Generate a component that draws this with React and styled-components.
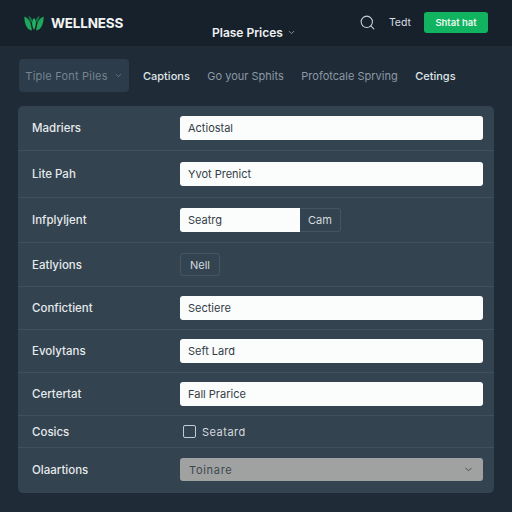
import React from "react";
import styled, { createGlobalStyle } from "styled-components";
import { ChevronDown, Search } from "lucide-react";

const GlobalStyle = createGlobalStyle`
  html, body {
    margin: 0;
    padding: 0;
    background: #1e2a36;
  }
  * {
    box-sizing: border-box;
  }
`;

const tabs = [
  { label: "Captions", bright: true },
  { label: "Go your Sphits" },
  { label: "Profotcale Sprving" },
  { label: "Cetings", bright: true },
];

const App = () => {
  return (
    <Page>
      <GlobalStyle />
      <Header>
        <Brand>
          <LogoMark />
          WELLNESS
        </Brand>
        <PageTitle>
          Plase Prices
          <ChevronDown size={9} strokeWidth={2.5} />
        </PageTitle>
        <HeaderActions>
          <Search size={17} strokeWidth={1.5} color="#c8d0d6" />
          <HeaderLink>Tedt</HeaderLink>
          <GreenButton>Shtat hat</GreenButton>
        </HeaderActions>
      </Header>
      <TabBar>
        <TabSelect>
          Tiple Font Piles
          <ChevronDown size={9} strokeWidth={2} />
        </TabSelect>
        {tabs.map((tab) => (
          <Tab key={tab.label} $bright={tab.bright}>
            {tab.label}
          </Tab>
        ))}
      </TabBar>
      <Card>
        <Row $height={45}>
          <Label>Madriers</Label>
          <TextInput>Actiostal</TextInput>
        </Row>
        <Row $height={47}>
          <Label>Lite Pah</Label>
          <TextInput>Yvot Prenict</TextInput>
        </Row>
        <Row $height={45}>
          <Label>Infplyljent</Label>
          <InputGroup>
            <GroupInput>Seatrg</GroupInput>
            <GroupAddon>Cam</GroupAddon>
          </InputGroup>
        </Row>
        <Row $height={44}>
          <Label>Eatlyions</Label>
          <OutlineButton>Nell</OutlineButton>
        </Row>
        <Row $height={43}>
          <Label>Confictient</Label>
          <TextInput>Sectiere</TextInput>
        </Row>
        <Row $height={43}>
          <Label>Evolytans</Label>
          <TextInput>Seft Lard</TextInput>
        </Row>
        <Row $height={43}>
          <Label>Certertat</Label>
          <TextInput>Fall Prarice</TextInput>
        </Row>
        <Row $height={32}>
          <Label>Cosics</Label>
          <CheckLabel>
            <CheckBox />
            Seatard
          </CheckLabel>
        </Row>
        <Row $height={45}>
          <Label>Olaartions</Label>
          <SelectBox>
            Toinare
            <ChevronDown size={11} strokeWidth={2} />
          </SelectBox>
        </Row>
      </Card>
    </Page>
  );
};

export default App;

const LogoMark = () => (
  <svg width="20" height="16" viewBox="0 0 20 16">
    <path d="M0.3 1.5C3 2.5 5 4.5 6.5 8L8 15.5C3 15 0.5 9.5 0.3 1.5Z" fill="#1fa85c" />
    <path d="M19.7 1.5C17 2.5 15 4.5 13.5 8L12 15.5C17 15 19.5 9.5 19.7 1.5Z" fill="#1fa85c" />
    <path d="M10 3C12.5 5.5 12.5 10 10 15C7.5 10 7.5 5.5 10 3Z" fill="#25b365" />
    <path d="M4.5 0.5C6.5 2 8 3.5 8.5 5.5L7.2 8C5.5 6 4.7 3.5 4.5 0.5Z" fill="#157343" />
    <path d="M15.5 0.5C13.5 2 12 3.5 11.5 5.5L12.8 8C14.5 6 15.3 3.5 15.5 0.5Z" fill="#157343" />
  </svg>
);

const Page = styled.div`
  width: 512px;
  height: 512px;
  overflow: hidden;
  display: flex;
  flex-direction: column;
  background: #1f2b37;
  font-family: "Inter", "Liberation Sans", sans-serif;
`;

const Header = styled.header`
  height: 46px;
  flex-shrink: 0;
  position: relative;
  display: flex;
  justify-content: space-between;
  padding: 0 24px;
  background: #17212c;
`;

const Brand = styled.div`
  display: flex;
  align-items: center;
  gap: 7px;
  height: 46px;
  font-size: 13.5px;
  font-weight: 700;
  letter-spacing: -0.2px;
  color: #f2f5f5;
`;

const PageTitle = styled.div`
  position: absolute;
  left: 212px;
  top: 25px;
  display: flex;
  align-items: center;
  gap: 4px;
  font-size: 12px;
  font-weight: 600;
  color: #eef1f2;
  svg {
    color: #8d98a2;
  }
`;

const HeaderActions = styled.div`
  display: flex;
  align-items: center;
  align-self: flex-start;
  height: 45px;
  svg {
    margin-right: 13px;
  }
`;

const HeaderLink = styled.span`
  font-size: 10.5px;
  color: #d8dee2;
  margin-right: 13px;
`;

const GreenButton = styled.button`
  width: 64px;
  height: 21px;
  border: none;
  border-radius: 3px;
  padding: 0;
  background: #10b35f;
  color: #e8f8ef;
  font-family: inherit;
  font-size: 9.5px;
  font-weight: 600;
`;

const TabBar = styled.nav`
  height: 60px;
  flex-shrink: 0;
  display: flex;
  align-items: center;
  padding: 0 19px 1px;
  background: #1f2b37;
`;

const TabSelect = styled.div`
  width: 110px;
  height: 33px;
  margin-right: 14px;
  display: flex;
  align-items: center;
  justify-content: center;
  gap: 6px;
  border-radius: 4px;
  background: #2c3c4b;
  color: #75848f;
  font-size: 11px;
  letter-spacing: 0.2px;
  white-space: nowrap;
`;

const Tab = styled.span`
  margin-right: 17.5px;
  white-space: nowrap;
  font-size: 11px;
  font-weight: ${({ $bright }) => ($bright ? 500 : 400)};
  color: ${({ $bright }) => ($bright ? "#dfe5e8" : "#8c99a4")};
`;

const Card = styled.section`
  margin: 0 18px;
  display: flex;
  flex-direction: column;
  border-radius: 5px;
  background: #33434f;
  overflow: hidden;
`;

const Row = styled.div`
  height: ${({ $height }) => $height}px;
  display: flex;
  align-items: center;
  padding: 0 11px 0 14px;
  border-bottom: 1px solid #3f505d;
  &:last-child {
    border-bottom: none;
    padding-bottom: 2px;
  }
`;

const Label = styled.div`
  width: 148px;
  flex-shrink: 0;
  font-size: 11.5px;
  font-weight: 500;
  color: #e6eaec;
`;

const TextInput = styled.div`
  flex: 1;
  height: 24px;
  display: flex;
  align-items: center;
  padding: 0 8px;
  border-radius: 3px;
  background: #fbfcfc;
  color: #333d45;
  font-size: 11px;
`;

const InputGroup = styled.div`
  display: flex;
  height: 24px;
`;

const GroupInput = styled(TextInput)`
  flex: none;
  width: 120px;
  border-radius: 3px 0 0 3px;
`;

const GroupAddon = styled.div`
  width: 41px;
  display: flex;
  align-items: center;
  justify-content: center;
  border: 1px solid #445562;
  border-left: none;
  border-radius: 0 3px 3px 0;
  color: #d5dbdf;
  font-size: 11px;
`;

const OutlineButton = styled.button`
  width: 40px;
  height: 23px;
  padding: 0;
  border: 1px solid #465763;
  border-radius: 3px;
  background: transparent;
  color: #d5dbdf;
  font-family: inherit;
  font-size: 11px;
`;

const CheckLabel = styled.label`
  display: flex;
  align-items: center;
  gap: 6px;
  margin-left: 3px;
  color: #d5dbdf;
  font-size: 11px;
  letter-spacing: 0.5px;
`;

const CheckBox = styled.span`
  width: 13px;
  height: 13px;
  border: 1.5px solid #c4ccd2;
  border-radius: 2px;
`;

const SelectBox = styled.div`
  flex: 1;
  height: 23px;
  display: flex;
  align-items: center;
  justify-content: space-between;
  padding: 0 9px;
  border-radius: 3px;
  background: #a0a2a2;
  color: #3d4850;
  font-size: 11px;
  letter-spacing: 0.7px;
`;
